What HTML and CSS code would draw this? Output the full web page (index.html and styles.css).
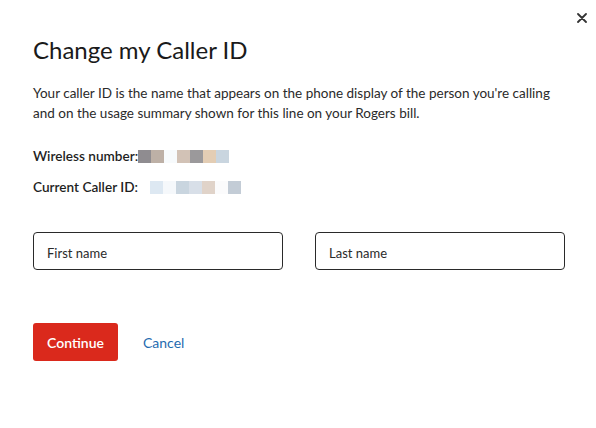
FILE: index.html
```html
<!DOCTYPE html>
<html lang="en">
<head>
<meta charset="utf-8">
<title>Change my Caller ID</title>
<link rel="stylesheet" href="styles.css">
</head>
<body>
<div class="modal">
  <button class="close" aria-label="Close">
    <svg width="10" height="10" viewBox="0 0 10 10"><path d="M1 1L9 9M9 1L1 9" stroke="#333" stroke-width="1.8" stroke-linecap="round"/></svg>
  </button>
  <h1 class="title">Change my Caller ID</h1>
  <p class="desc">Your caller ID is the name that appears on the phone display of the person you're calling and on the usage summary shown for this line on your Rogers bill.</p>
  <div class="info">
    <div class="row">
      <span class="label">Wireless number:</span>
      <span class="blur b-wireless">
        <i style="background:#8f8c90"></i><i style="background:#bdb0a6"></i><i style="background:#f7fafc"></i><i style="background:#d2c2b6"></i><i style="background:#9b999b"></i><i style="background:#e3cdb4"></i><i style="background:#c9d5df"></i>
      </span>
    </div>
    <div class="row">
      <span class="label">Current Caller ID:</span>
      <span class="blur b-caller">
        <i style="background:#dde8f2"></i><i style="background:#f5f8fb"></i><i style="background:#c9d5df"></i><i style="background:#d8dfe8"></i><i style="background:#e0d3c9"></i><i style="background:#fbfbfc"></i><i style="background:#c3ccd6"></i>
      </span>
    </div>
  </div>
  <div class="fields">
    <div class="field">First name</div>
    <div class="field">Last name</div>
  </div>
  <div class="actions">
    <button class="btn-primary">Continue</button>
    <button class="btn-link">Cancel</button>
  </div>
</div>
</body>
</html>
```
FILE: styles.css
```css
* { box-sizing: border-box; }
html, body { margin: 0; background: #fff; }
body {
  font-family: Lato, "Noto Sans", sans-serif;
  color: #1f1f1f;
  width: 596px;
  height: 428px;
}
.modal {
  position: relative;
  padding: 34px 31px 0 33px;
}
.close {
  position: absolute;
  top: 12px;
  right: 8px;
  width: 12px;
  height: 12px;
  padding: 0;
  border: 0;
  background: none;
  display: flex;
  align-items: center;
  justify-content: center;
}
.title {
  margin: 0;
  font-size: 24px;
  line-height: 32px;
  font-weight: 400;
  color: #1a1a1a;
}
.desc {
  margin: 17px 0 0;
  max-width: 525px;
  font-size: 13.5px;
  line-height: 20px;
  color: #2a2a2a;
}
.info { margin-top: 23px; }
.row {
  display: flex;
  align-items: center;
  height: 20px;
  font-size: 13.6px;
}
.row + .row { margin-top: 11px; }
.label { font-weight: 600; color: #1f1f1f; }
.blur { display: flex; height: 13px; }
.blur i { display: block; width: 13px; height: 13px; }
.b-wireless { margin-left: 0; }
.b-caller { margin-left: 12px; }
.fields {
  margin-top: 35px;
  display: grid;
  grid-template-columns: 250px 250px;
  gap: 32px;
}
.field {
  height: 38px;
  border: 1px solid #2a2a2a;
  border-radius: 4px;
  padding: 3px 13px 0;
  display: flex;
  align-items: center;
  font-size: 13px;
  color: #2a2a2a;
}
.actions {
  margin-top: 53px;
  display: flex;
  align-items: center;
  gap: 25px;
}
.btn-primary {
  width: 85px;
  height: 38px;
  border: 0;
  border-radius: 3px;
  background: #da291c;
  color: #fff;
  font-family: inherit;
  font-size: 14px;
  font-weight: 600;
}
.btn-link {
  border: 0;
  background: none;
  padding: 0;
  color: #1f6bb0;
  font-family: inherit;
  font-size: 14px;
}
```
